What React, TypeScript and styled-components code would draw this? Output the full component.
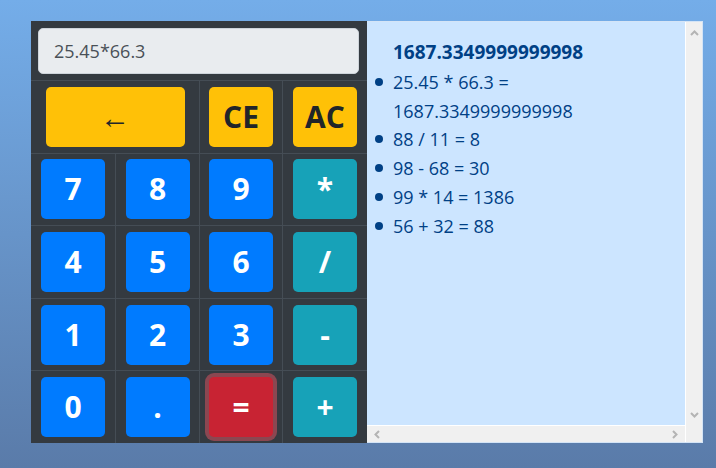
import React from "react";
import styled, { createGlobalStyle, css } from "styled-components";

const GlobalStyle = createGlobalStyle`
  html, body { margin: 0; padding: 0; }
  body { font-family: "Open Sans", "Liberation Sans", sans-serif; }
  * { box-sizing: border-box; }
`;

const Page = styled.div`
  width: 716px;
  height: 468px;
  background: linear-gradient(180deg, #74ade9 0%, #5a7ba9 100%);
  padding: 21px 13px 25px 31px;
  display: flex;
`;

const Calculator = styled.div`
  width: 336px;
  height: 422px;
  background: #343a40;
  display: grid;
  grid-template-columns: 84px 84px 83px 85px;
  grid-template-rows: 59px repeat(5, 1fr);
`;

const DisplayCell = styled.div`
  grid-column: 1 / -1;
  padding: 7px 8px 6px 7px;
`;

const Display = styled.input`
  width: 100%;
  height: 100%;
  background: #e9ecef;
  border: 1px solid #ced4da;
  border-radius: 5px;
  padding: 0 15px;
  font-family: "Open Sans", sans-serif;
  font-size: 18px;
  color: #495057;
  outline: none;
`;

const Cell = styled.div<{ $span?: number; $first?: boolean }>`
  grid-column: span ${(p) => p.$span ?? 1};
  border-top: 1px solid #454d55;
  border-left: ${(p) => (p.$first ? "none" : "1px solid #454d55")};
  display: flex;
  align-items: center;
  justify-content: center;
`;

type Variant = "primary" | "info" | "warning" | "danger";

const variants: Record<Variant, ReturnType<typeof css>> = {
  primary: css`
    background: #007bff;
    color: #fff;
  `,
  info: css`
    background: #17a2b8;
    color: #fff;
  `,
  warning: css`
    background: #ffc107;
    color: #212529;
  `,
  danger: css`
    background: #c82333;
    color: #fff;
    box-shadow: 0 0 0 4px rgba(225, 83, 97, 0.5);
  `,
};

const Key = styled.button<{ $variant: Variant; $wide?: boolean; $thin?: boolean }>`
  width: ${(p) => (p.$wide ? "139px" : "64px")};
  height: 60px;
  border: none;
  border-radius: 5px;
  padding: 0;
  font-family: "Open Sans", sans-serif;
  font-size: 30px;
  font-weight: ${(p) => (p.$thin ? 400 : 700)};
  line-height: 1;
  display: flex;
  align-items: center;
  justify-content: center;
  ${(p) => variants[p.$variant]}
`;

const History = styled.div`
  width: 336px;
  height: 422px;
  border: 1px solid #d4e4f6;
  border-left: none;
  display: grid;
  grid-template-columns: 1fr 17px;
  grid-template-rows: 1fr 17px;
`;

const HistoryBody = styled.div`
  background: #cce5ff;
  color: #004085;
  padding: 15px 0 0 8px;
  overflow: hidden;
`;

const Result = styled.div`
  font-size: 19px;
  font-weight: 700;
  line-height: 30px;
  padding-left: 18px;
`;

const List = styled.ul`
  list-style: none;
  margin: 1px 0 0;
  padding: 0;
`;

const Item = styled.li`
  display: grid;
  grid-template-columns: 18px 1fr;
  font-size: 18px;
  line-height: 28.7px;
  padding-right: 6px;

  &::before {
    content: "";
    width: 8px;
    height: 8px;
    border-radius: 50%;
    background: #004085;
    margin: 10px 0 0 0;
  }
`;

const ScrollV = styled.div`
  background: #f0f0f0;
  border-left: 1px solid #fff;
  grid-row: 1 / 3;
  grid-column: 2;
  display: flex;
  flex-direction: column;
  justify-content: space-between;
  align-items: center;
  padding: 7px 0 22px;
`;

const ScrollH = styled.div`
  background: #f0f0f0;
  border-top: 1px solid #fff;
  grid-row: 2;
  grid-column: 1;
  display: flex;
  justify-content: space-between;
  align-items: center;
  padding: 0 5px 0 6px;
`;

const Chevron = ({ dir }: { dir: "up" | "down" | "left" | "right" }) => {
  const pts: Record<string, string> = {
    up: "1,6 4.5,2.5 8,6",
    down: "1,2 4.5,5.5 8,2",
    left: "6,1 2.5,4.5 6,8",
    right: "2,1 5.5,4.5 2,8",
  };
  return (
    <svg width="9" height="9" viewBox="0 0 9 9">
      <polyline points={pts[dir]} fill="none" stroke="#b4b4b4" strokeWidth="2" />
    </svg>
  );
};

const history = [
  "25.45 * 66.3 = 1687.3349999999998",
  "88 / 11 = 8",
  "98 - 68 = 30",
  "99 * 14 = 1386",
  "56 + 32 = 88",
];

const rows: { label: string; v: Variant }[][] = [
  [
    { label: "7", v: "primary" },
    { label: "8", v: "primary" },
    { label: "9", v: "primary" },
    { label: "*", v: "info" },
  ],
  [
    { label: "4", v: "primary" },
    { label: "5", v: "primary" },
    { label: "6", v: "primary" },
    { label: "/", v: "info" },
  ],
  [
    { label: "1", v: "primary" },
    { label: "2", v: "primary" },
    { label: "3", v: "primary" },
    { label: "-", v: "info" },
  ],
  [
    { label: "0", v: "primary" },
    { label: ".", v: "primary" },
    { label: "=", v: "danger" },
    { label: "+", v: "info" },
  ],
];

export default function App() {
  return (
    <>
      <GlobalStyle />
      <Page>
        <Calculator>
          <DisplayCell>
            <Display readOnly value="25.45*66.3" />
          </DisplayCell>
          <Cell $span={2} $first>
            <Key $variant="warning" $wide $thin>
              ←
            </Key>
          </Cell>
          <Cell>
            <Key $variant="warning">CE</Key>
          </Cell>
          <Cell>
            <Key $variant="warning">AC</Key>
          </Cell>
          {rows.map((row, ri) =>
            row.map((k, ci) => (
              <Cell key={`${ri}-${ci}`} $first={ci === 0}>
                <Key $variant={k.v}>{k.label}</Key>
              </Cell>
            ))
          )}
        </Calculator>
        <History>
          <HistoryBody>
            <Result>1687.3349999999998</Result>
            <List>
              {history.map((h) => (
                <Item key={h}>
                  <span>{h}</span>
                </Item>
              ))}
            </List>
          </HistoryBody>
          <ScrollV>
            <Chevron dir="up" />
            <Chevron dir="down" />
          </ScrollV>
          <ScrollH>
            <Chevron dir="left" />
            <Chevron dir="right" />
          </ScrollH>
        </History>
      </Page>
    </>
  );
}
